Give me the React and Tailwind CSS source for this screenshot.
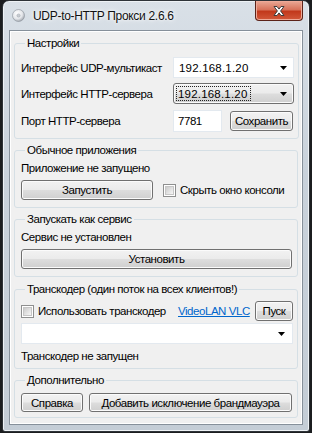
import React from "react";

const btn =
  "flex items-center justify-center rounded-[3px] border border-[#707070] bg-[linear-gradient(#f2f2f2_0%,#ebebeb_48%,#dddddd_52%,#cfcfcf_100%)] shadow-[inset_0_0_0_1px_#fbfbfb] text-black";

function Button({ className, children }) {
  return <div className={`${btn} ${className}`}>{children}</div>;
}

function Arrow() {
  return (
    <svg width="7" height="4" viewBox="0 0 7 4" className="shrink-0">
      <path d="M0 0h7L3.5 4z" fill="#000" />
    </svg>
  );
}

function Check() {
  return (
    <div className="h-[13px] w-[13px] shrink-0 border border-[#8e8f8f] bg-white p-[1px]">
      <div className="h-full w-full border border-[#c6c6c6] bg-[linear-gradient(135deg,#cbcbcb,#f6f6f6)]" />
    </div>
  );
}

function Group({ title, className, children }) {
  return (
    <fieldset className={`rounded-[3px] border border-[#d5dfe5] pl-[6px] pr-[4px] ${className}`}>
      <legend className="ml-[4px] px-[2px] leading-[14px]">{title}</legend>
      {children}
    </fieldset>
  );
}

export default function App() {
  return (
    <div className="h-[433px] w-[312px] overflow-hidden whitespace-nowrap bg-[#1b1d1f] font-['Liberation_Sans',Arial,sans-serif] text-[11.5px] leading-[14px] tracking-[-0.45px] text-black">
      <div className="ml-[2px] flex h-[432px] w-[308px] flex-col rounded-t-[7px] rounded-b-[3px] border border-[#2e3338] bg-[linear-gradient(#d9e0e7,#c9d2db_40%,#c4cdd6)] shadow-[inset_0_0_0_1px_#eef2f5]">
        <div className="flex h-[29px] shrink-0 items-start">
          <div className="ml-[9px] mt-[8px] h-[13px] w-[13px] shrink-0">
            <svg width="13" height="13" viewBox="0 0 13 13">
              <defs>
                <radialGradient id="d" cx="0.4" cy="0.35" r="0.7">
                  <stop offset="0" stopColor="#ffffff" />
                  <stop offset="0.6" stopColor="#e4e6ea" />
                  <stop offset="1" stopColor="#9aa0a8" />
                </radialGradient>
              </defs>
              <circle cx="6.5" cy="6.5" r="6" fill="url(#d)" stroke="#8a9098" strokeWidth="0.6" />
              <circle cx="6.5" cy="6.5" r="1.6" fill="#c8ccd2" stroke="#9aa0a8" strokeWidth="0.5" />
            </svg>
          </div>
          <div className="ml-[8px] mt-[8px] text-[12px] leading-[15px] tracking-[-0.3px] text-[#111] [text-shadow:0_0_6px_#ffffff,0_0_3px_#ffffff]">
            UDP-to-HTTP Прокси 2.6.6
          </div>
          <div className="ml-auto mr-[6px] flex h-[20px] w-[48px] items-center justify-center rounded-b-[4px] border border-t-0 border-[#5b2319] bg-[linear-gradient(#e9a996_0%,#d7735b_45%,#c2391c_55%,#d2583a_100%)] shadow-[inset_0_0_0_1px_#eeaa98]">
            <svg width="14" height="12" viewBox="0 0 14 12">
              <path
                d="M2 1.5h3l2 2.6 2-2.6h3L8.6 6 12 10.5H9L7 7.9 5 10.5H2L5.4 6z"
                fill="#ffffff"
                stroke="#3d3d3d"
                strokeWidth="1"
                strokeLinejoin="round"
              />
            </svg>
          </div>
        </div>

        <div className="mx-[6px] flex h-[395px] flex-col border border-[#86909a] bg-[#f0f0f0] px-[4px] pt-[5px] shadow-[inset_0_0_0_1px_#ffffff]">
          <Group title="Настройки" className="pb-[6px]">
            <div className="mt-[7px] flex h-[21px] items-center">
              <div className="w-[152px] shrink-0">Интерфейс UDP-мультикаст</div>
              <div className="flex h-[21px] w-[121px] items-center border border-[#e3e9ef] bg-white pl-[5px] pr-[6px]">
                <span className="tracking-[0.2px]">192.168.1.20</span>
                <span className="ml-auto">
                  <Arrow />
                </span>
              </div>
            </div>
            <div className="mt-[5px] flex h-[21px] items-center">
              <div className="w-[152px] shrink-0">Интерфейс HTTP-сервера</div>
              <div className={`${btn} h-[21px] w-[121px] justify-start p-[2px] pr-[6px]`}>
                <span className="flex h-full items-center border border-dotted border-[#222] pl-[1px] pr-[2px] tracking-[0.2px]">
                  192.168.1.20
                </span>
                <span className="ml-auto">
                  <Arrow />
                </span>
              </div>
            </div>
            <div className="mt-[6px] flex h-[22px] items-center">
              <div className="w-[152px] shrink-0">Порт HTTP-сервера</div>
              <div className="flex h-[22px] w-[49px] items-center border border-[#e3e9ef] bg-white pl-[4px]">7781</div>
              <Button className="ml-[8px] h-[20px] w-[63px]">Сохранить</Button>
            </div>
          </Group>

          <Group title="Обычное приложения" className="mt-[4px] pb-[7px]">
            <div className="mt-[4px]">Приложение не запущено</div>
            <div className="mt-[5px] flex h-[20px] items-center">
              <Button className="h-[20px] w-[132px]">Запустить</Button>
              <div className="ml-[10px]">
                <Check />
              </div>
              <div className="ml-[4px]">Скрыть окно консоли</div>
            </div>
          </Group>

          <Group title="Запускать как сервис" className="mt-[4px] pb-[7px]">
            <div className="mt-[4px]">Сервис не установлен</div>
            <Button className="mt-[5px] h-[20px] w-[271px]">Установить</Button>
          </Group>

          <Group title="Транскодер (один поток на всех клиентов!)" className="mt-[5px] pb-[5px]">
            <div className="mt-[5px] flex h-[20px] items-center">
              <Check />
              <div className="ml-[4px] w-[140px] shrink-0">Использовать транскодер</div>
              <div className="text-[#0066cc] underline">VideoLAN VLC</div>
              <Button className="ml-auto h-[20px] w-[38px]">Пуск</Button>
            </div>
            <div className="mt-[2px] flex h-[21px] items-center justify-end border border-[#e3e9ef] bg-white pr-[7px]">
              <Arrow />
            </div>
            <div className="mt-[5px]">Транскодер не запущен</div>
          </Group>

          <Group title="Дополнительно" className="mt-[4px] pb-[5px]">
            <div className="mt-[6px] flex h-[19px] items-center">
              <Button className="h-[19px] w-[62px]">Справка</Button>
              <Button className="ml-[6px] h-[19px] w-[203px]">Добавить исключение брандмауэра</Button>
            </div>
          </Group>
        </div>
      </div>
    </div>
  );
}
